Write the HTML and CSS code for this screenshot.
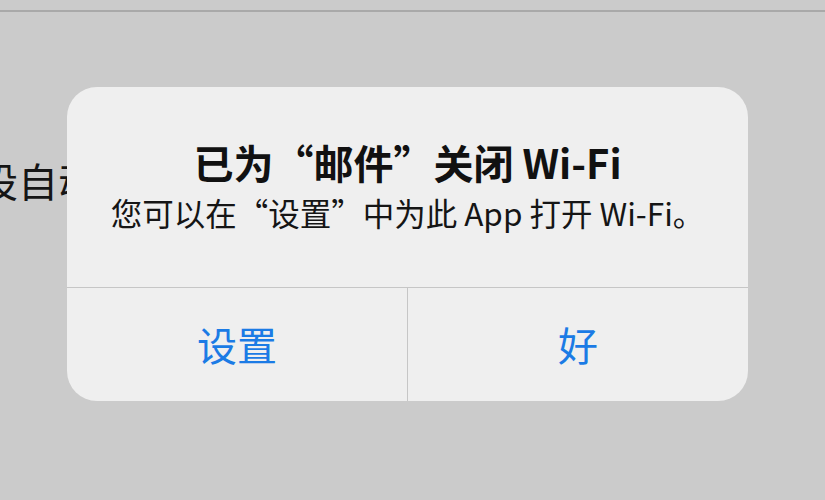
FILE: index.html
```html
<!DOCTYPE html>
<html lang="zh-CN">
<head>
    <meta charset="UTF-8">
    <meta name="viewport" content="width=device-width, initial-scale=1.0">
    <title>Wi-Fi 已关闭</title>
    <link rel="stylesheet" href="styles.css">
</head>
<body>
    <div class="top-bar"></div>
    <div class="page">
        <p class="page-text">设自动加入</p>
    </div>

    <div class="alert">
        <div class="alert-body">
            <h1 class="alert-title">已为“邮件”关闭 Wi-Fi</h1>
            <p class="alert-message">您可以在“设置”中为此 App 打开 Wi-Fi。</p>
        </div>
        <div class="alert-actions">
            <button type="button" class="alert-button">设置</button>
            <button type="button" class="alert-button">好</button>
        </div>
    </div>
</body>
</html>
```

FILE: styles.css
```css
body {
    font-family: "Noto Sans CJK SC", "Noto Sans", sans-serif;
    background-color: #cbcbcb;
    color: #111;
    margin: 0;
    padding: 0;
    width: 825px;
    height: 500px;
    overflow: hidden;
    position: relative;
}
.top-bar {
    height: 10px;
    border-bottom: 2px solid #a9a9a9;
}
.page {
    padding: 143px 0 0 0;
}
.page-text {
    margin: 0 0 0 -22px;
    font-size: 40px;
    line-height: 50px;
    color: #151515;
    white-space: nowrap;
}
.alert {
    position: absolute;
    left: 67px;
    top: 87px;
    width: 681px;
    height: 314px;
    background: #efefef;
    border-radius: 30px;
    display: flex;
    flex-direction: column;
    overflow: hidden;
}
.alert-body {
    height: 201px;
    display: flex;
    flex-direction: column;
    align-items: center;
    padding-top: 47px;
    box-sizing: border-box;
    border-bottom: 1px solid #c6c6c6;
}
.alert-title {
    margin: 0;
    font-size: 40px;
    line-height: 56px;
    font-weight: 700;
    color: #111;
}
.alert-message {
    margin: 0;
    font-size: 31.5px;
    line-height: 44px;
    color: #151515;
}
.alert-actions {
    flex: 1;
    display: flex;
}
.alert-button {
    flex: 1;
    margin: 0;
    padding: 0 0 2px 0;
    border: none;
    background: none;
    font-family: inherit;
    font-size: 40px;
    color: #1b7be5;
    cursor: pointer;
}
.alert-button + .alert-button {
    border-left: 1px solid #c6c6c6;
}
```
